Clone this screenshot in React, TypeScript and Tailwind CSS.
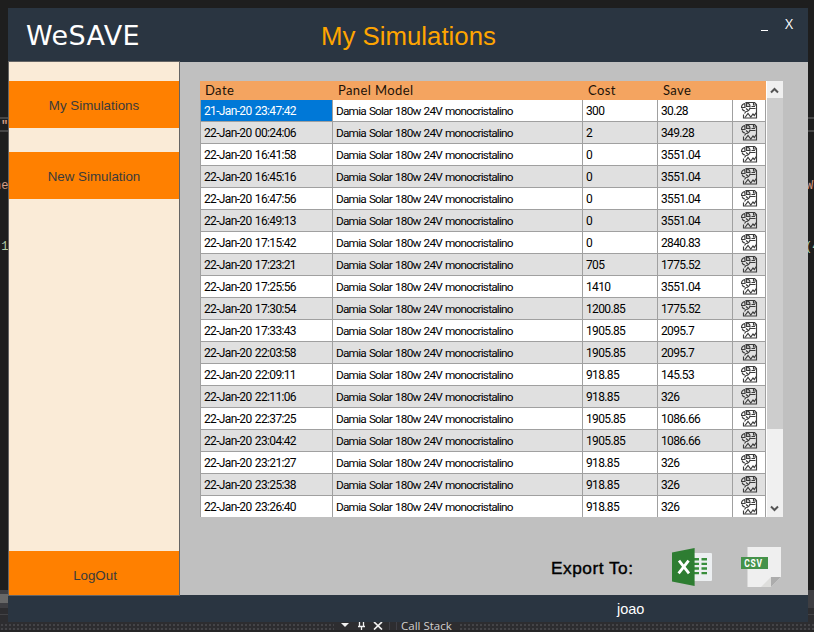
const rows: [string, string, string][] = [
  ['21-Jan-20 23:47:42', '300', '30.28'],
  ['22-Jan-20 00:24:06', '2', '349.28'],
  ['22-Jan-20 16:41:58', '0', '3551.04'],
  ['22-Jan-20 16:45:16', '0', '3551.04'],
  ['22-Jan-20 16:47:56', '0', '3551.04'],
  ['22-Jan-20 16:49:13', '0', '3551.04'],
  ['22-Jan-20 17:15:42', '0', '2840.83'],
  ['22-Jan-20 17:23:21', '705', '1775.52'],
  ['22-Jan-20 17:25:56', '1410', '3551.04'],
  ['22-Jan-20 17:30:54', '1200.85', '1775.52'],
  ['22-Jan-20 17:33:43', '1905.85', '2095.7'],
  ['22-Jan-20 22:03:58', '1905.85', '2095.7'],
  ['22-Jan-20 22:09:11', '918.85', '145.53'],
  ['22-Jan-20 22:11:06', '918.85', '326'],
  ['22-Jan-20 22:37:25', '1905.85', '1086.66'],
  ['22-Jan-20 23:04:42', '1905.85', '1086.66'],
  ['22-Jan-20 23:21:27', '918.85', '326'],
  ['22-Jan-20 23:25:38', '918.85', '326'],
  ['22-Jan-20 23:26:40', '918.85', '326'],
];

const COLS = 'grid grid-cols-[132px_250px_75px_75px_33px]';

function ReportIcon() {
  return (
    <svg width="17" height="17" viewBox="0 0 17 17" fill="none" stroke="#3c3c3c" strokeWidth="1.15">
      <path d="M4.500.5h9l2 2v13.500h-13V12.500" />
      <path d="M12.500.5v2.500h3" />
      <path d="M3.800 1.500C1.500 2 .5 3.500.5 5.500H4z" />
      <path d="M5.500 1v3.500H9C9 2.500 7.500 1 5.500 1z" fill="#3c3c3c" fillOpacity=".25" />
      <path d="M1 6.500c.5 1.500 1.500 2.500 3 2.500" />
      <path d="M9 5.500C9 8 7 9.500 5 9.500L3.500 11.500M5 6.500l2.500 2" />
      <path d="M8.500 6.500h6M10.500 4.500h3.500" />
      <path d="M4 15.500l3-4 2.800 3.500L12 12l1.300 1.500 2-3" />
    </svg>
  );
}

function ExcelIcon() {
  return (
    <svg width="40" height="38" viewBox="0 0 40 38">
      <rect x="20" y="5" width="20" height="28" rx="1" fill="#eceff1" />
      <path d="M22 11.2h5M22 15.9h5M22 20.5h5M22 25.1h5M29.5 11.2h5.500M29.5 15.9h5.500M29.5 20.5h5.500M29.5 25.1h5.500" stroke="#388e3c" strokeWidth="2.4" />
      <path d="M22.6 0v38L0 33.6V4.4z" fill="#2e7d32" />
      <path d="M7 12.6l10 12.8M16.6 12.6L6.6 25.4" stroke="#fff" strokeWidth="2.8" />
    </svg>
  );
}

function CsvIcon() {
  return (
    <svg width="40" height="40" viewBox="0 0 40 40" className="overflow-visible">
      <path d="M6.5 0H40v30L30 40H6.5z" fill="#efefef" />
      <path d="M30 30L20 40h10z" fill="#dededc" />
      <path d="M30 30h10L30 40z" fill="#acacac" />
      <rect x="0" y="10" width="27" height="12" fill="#45924a" />
      <text x="3.3" y="19.6" fill="#fff" fontFamily="Roboto, sans-serif" fontWeight="700" fontSize="10.5" letterSpacing="0.9" textLength="18.5" lengthAdjust="spacingAndGlyphs">CSV</text>
    </svg>
  );
}

function Backdrop() {
  return (
    <div className="absolute inset-0 font-['Liberation_Mono',monospace] text-[12px] leading-[14px] text-[#d69d85]">
      <div className="absolute left-0 top-[117px] h-[15px] w-full border-y-2 border-[#464646]" />
      <span className="absolute left-[1px] top-[119px] font-bold">"</span>
      <span className="absolute left-[-6px] top-[179px]">ne</span>
      <span className="absolute left-[-6px] top-[240px] text-[#b5cea8]">(1</span>
      <span className="absolute left-[806px] top-[179px]">Wo</span>
      <span className="absolute left-[805px] top-[240px] text-[#b5cea8]">(4</span>
      <div className="absolute left-0 top-[590px] h-[42px] w-full bg-[#2d2d30]">
        <div className="h-[18px] bg-[#3e3e42] pt-1">
          <div className="h-[9px] w-[8px] bg-[#686868]" />
        </div>
        <div className="mt-[6px] h-px bg-[#434346]" />
      </div>
      <div className="absolute left-0 top-[622px] flex h-[10px] w-full items-start overflow-hidden border-b-2 border-[#252526] bg-[#2d2d30] font-['Open_Sans',sans-serif] text-[12px] text-[#d0d0d0]">
        <div className="mt-px h-[7px] w-[334px] bg-[radial-gradient(#46464a_0.7px,transparent_0.8px)] bg-[size:4px_4px]" />
        <svg width="65" height="9" viewBox="0 0 65 9" fill="none" stroke="#f1f1f1">
          <path d="M7 1h8l-4 4z" fill="#f1f1f1" stroke="none" />
          <path d="M25.500 0v4M29.500 0v4M24 4.500h7M27.500 4.500V9" strokeWidth="1.300" />
          <path d="M40 0l8 7.500M48 0l-8 7.500" strokeWidth="1.700" />
          <path d="M55.500 0v9M62.500 0v9" stroke="#3f3f46" />
        </svg>
        <span className="-mt-[4px] ml-[2px] w-[58px] shrink-0 whitespace-nowrap text-[11.500px] leading-[16px]">Call Stack</span>
        <div className="mt-px h-[7px] flex-1 bg-[radial-gradient(#46464a_0.7px,transparent_0.8px)] bg-[size:4px_4px]" />
      </div>
    </div>
  );
}

const sideButton = 'flex w-full items-center justify-center bg-[#ff8000] text-[13.33px] text-[#3b3b3b]';

function Sidebar() {
  return (
    <nav className="relative -mt-px flex h-[535px] w-[172px] flex-col border border-[#646464] bg-[#faebd7] pt-[19px]">
      <button className={`${sideButton} h-[47px] pt-[2px]`}>My Simulations</button>
      <button className={`${sideButton} mt-6 h-[47px] pt-[2px]`}>New Simulation</button>
      <button className={`${sideButton} mt-auto h-[44px] pl-[2px] pt-[6px]`}>LogOut</button>
    </nav>
  );
}

function SimulationTable() {
  return (
    <div className="flex h-[436px] w-[583px] overflow-hidden">
      <div className="w-[566px] shrink-0">
        <div className={`${COLS} h-[19px] items-center bg-[#f4a460] pl-px font-['Lato',sans-serif] text-[13px] tracking-[0.4px] text-[#1c1208]`}>
          <span className="pl-1">Date</span>
          <span className="pl-[5px]">Panel Model</span>
          <span className="pl-[5px]">Cost</span>
          <span className="pl-[5px]">Save</span>
        </div>
        <div className="border-l border-[#a0a0a0] font-['Roboto',sans-serif] text-[12px] text-black">
          {rows.map(([date, cost, save], i) => (
            <div key={date} className={`${COLS} h-[22px] leading-[23px] *:h-full *:overflow-hidden *:border-b *:border-r *:border-[#a0a0a0] *:whitespace-nowrap *:pl-[3px] ${i % 2 ? 'bg-[#e0e0e0]' : 'bg-white'}`}>
              <span className={`tracking-[-0.65px] [word-spacing:1px] ${i === 0 ? 'bg-[#0078d7] text-white' : ''}`}>{date}</span>
              <span className="text-[11.800px] tracking-[-0.79px] [word-spacing:0.9px]">Damia Solar 180w 24V monocristalino</span>
              <span className="tracking-[-0.65px]">{cost}</span>
              <span className="tracking-[-0.65px]">{save}</span>
              <span className="flex items-start justify-center pr-[3px] pt-[2px]"><ReportIcon /></span>
            </div>
          ))}
        </div>
      </div>
      <div className="flex h-full w-[17px] shrink-0 flex-col border-l border-white bg-[#f0f0f0]">
        <div className="flex h-[17px] items-center justify-center pr-px pt-px">
          <svg width="9" height="7" viewBox="0 0 9 7" fill="none" stroke="#555" strokeWidth="2"><path d="M1 5.500l3.500-3.500L8 5.500" /></svg>
        </div>
        <div className="h-[331px] bg-[#cdcdcd]" />
        <div className="mt-auto flex h-[17px] items-center justify-center pb-px pr-px">
          <svg width="9" height="7" viewBox="0 0 9 7" fill="none" stroke="#555" strokeWidth="2"><path d="M1 1.500l3.500 3.500L8 1.500" /></svg>
        </div>
      </div>
    </div>
  );
}

export default function App() {
  return (
    <div className="relative h-[632px] w-[814px] overflow-hidden bg-[#1e1e1e] font-['Liberation_Sans',sans-serif]">
      <Backdrop />
      <div className="absolute left-[8px] top-[8px] flex h-[614px] w-[800px] flex-col bg-[#c0c0c0]">
        <header className="flex h-[54px] shrink-0 bg-[#2a3541]">
          <h1 className="w-[313px] pl-[18px] pt-[11px] font-['DejaVu_Sans',Verdana,sans-serif] text-[27px] font-normal leading-[34px] tracking-[0.4px] text-white">WeSAVE</h1>
          <h2 className="flex-1 pt-[13px] text-[25.800px] leading-[30px] text-[#ffa500]">My Simulations</h2>
          <div className="flex w-[47px] gap-[16px] pt-[7px] font-['Open_Sans',sans-serif] text-[14px] leading-[17px] text-white">
            <span className="mt-[15px] h-px w-[7px] self-start bg-white" />
            <span className="pl-px">X</span>
          </div>
        </header>
        <div className="flex h-[533px] shrink-0">
          <Sidebar />
          <main className="flex flex-1 flex-col pl-5 pt-[19px]">
            <SimulationTable />
            <div className="flex pt-[30px]">
              <span className="ml-[351px] w-[121px] pt-[10px] text-[17.300px] leading-[22px] tracking-[0.5px] text-black [-webkit-text-stroke:0.4px_black]">Export To:</span>
              <span className="pt-px"><ExcelIcon /></span>
              <span className="ml-[29px]"><CsvIcon /></span>
            </div>
          </main>
        </div>
        <footer className="h-[27px] bg-[#2a3541] pl-[609px] pt-[4px] text-[14.500px] leading-[20px] text-white">joao</footer>
      </div>
    </div>
  );
}
